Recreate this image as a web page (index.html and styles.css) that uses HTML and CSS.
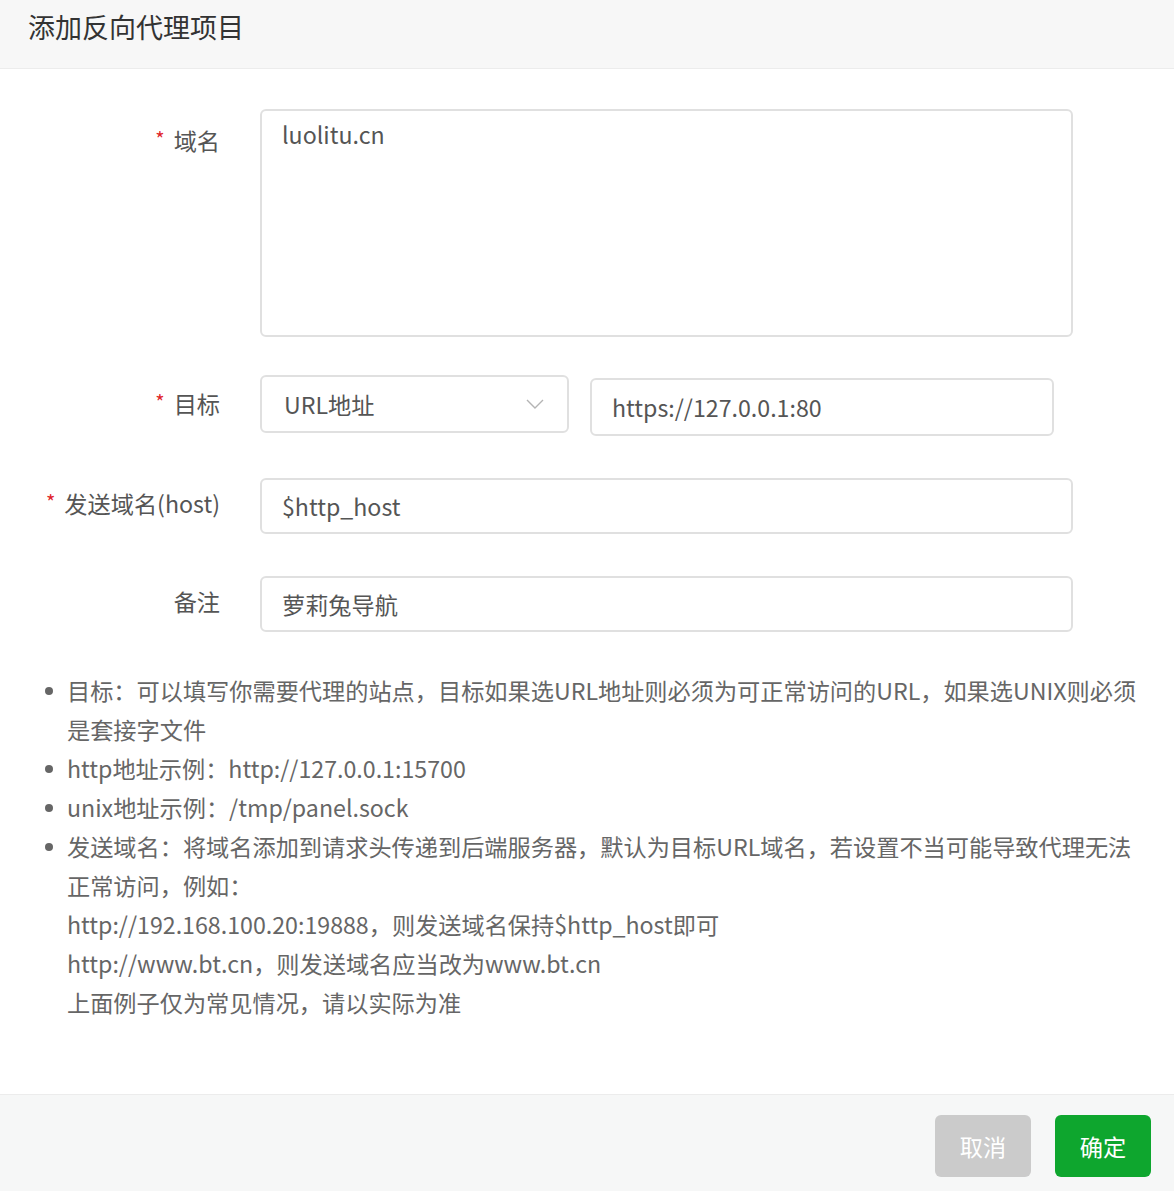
FILE: index.html
```html
<!DOCTYPE html>
<html lang="zh-CN">
<head>
<meta charset="utf-8">
<title>添加反向代理项目</title>
<link rel="stylesheet" href="styles.css">
</head>
<body>
<div class="modal">
  <div class="modal-header">添加反向代理项目</div>
  <div class="modal-body">
    <div class="form-row row-domain">
      <label class="form-label label-top"><span class="req">*</span>域名</label>
      <div class="form-field">
        <div class="textarea">luolitu.cn</div>
      </div>
    </div>
    <div class="form-row row-target">
      <label class="form-label"><span class="req">*</span>目标</label>
      <div class="form-field field-pair">
        <div class="select">
          <span>URL地址</span>
          <svg class="chevron" width="18" height="10" viewBox="0 0 18 10"><path d="M1 1 L9 9 L17 1" fill="none" stroke="#b4b4b4" stroke-width="1.4"/></svg>
        </div>
        <div class="input input-url">https://127.0.0.1:80</div>
      </div>
    </div>
    <div class="form-row row-host">
      <label class="form-label"><span class="req">*</span>发送域名(host)</label>
      <div class="form-field">
        <div class="input input-wide">$http_host</div>
      </div>
    </div>
    <div class="form-row row-note">
      <label class="form-label">备注</label>
      <div class="form-field">
        <div class="input input-wide">萝莉兔导航</div>
      </div>
    </div>
    <ul class="help">
      <li>目标：可以填写你需要代理的站点，目标如果选URL地址则必须为可正常访问的URL，如果选UNIX则必须是套接字文件</li>
      <li>http地址示例：http://127.0.0.1:15700</li>
      <li>unix地址示例：/tmp/panel.sock</li>
      <li>发送域名：将域名添加到请求头传递到后端服务器，默认为目标URL域名，若设置不当可能导致代理无法正常访问，例如：<br>http://192.168.100.20:19888，则发送域名保持$http_host即可<br>http://www.bt.cn，则发送域名应当改为www.bt.cn<br>上面例子仅为常见情况，请以实际为准</li>
    </ul>
  </div>
  <div class="modal-footer">
    <button class="btn btn-cancel">取消</button>
    <button class="btn btn-ok">确定</button>
  </div>
</div>
</body>
</html>
```
FILE: styles.css
```css
html, body {
  margin: 0;
  padding: 0;
  background: #ffffff;
}
body {
  font-family: "Noto Sans CJK SC", "Noto Sans", sans-serif;
  color: #555;
}
.modal {
  width: 1174px;
  height: 1191px;
  display: flex;
  flex-direction: column;
}
.modal-header {
  height: 69px;
  box-sizing: border-box;
  background: #f7f7f7;
  border-bottom: 1px solid #ececec;
  padding-left: 28px;
  font-size: 27px;
  line-height: 54px;
  color: #333;
}
.modal-body {
  flex: 1;
  padding-top: 40px;
}
.form-row {
  display: flex;
  align-items: center;
}
.form-label {
  width: 220px;
  flex: none;
  text-align: right;
  font-size: 23.2px;
  color: #555;
  margin-right: 40px;
  line-height: 30px;
  padding-bottom: 6px;
}
.label-top {
  align-self: flex-start;
  padding-top: 16px;
  padding-bottom: 0;
}
.req {
  color: #e0252b;
  font-size: 20px;
  line-height: 0;
  vertical-align: 3px;
  margin-right: 9px;
}
.form-field {
  display: flex;
  align-items: flex-start;
}
.row-domain { margin-bottom: 38px; }
.row-target { margin-bottom: 42px; }
.row-host { margin-bottom: 42px; }
.row-note { margin-bottom: 39px; }

.textarea {
  width: 813px;
  height: 228px;
  box-sizing: border-box;
  border: 2px solid #e0e0e0;
  border-radius: 6px;
  padding: 6px 20px;
  font-size: 23.2px;
  line-height: 34px;
  color: #555;
}
.field-pair {
  gap: 21px;
}
.select {
  width: 309px;
  height: 58px;
  box-sizing: border-box;
  border: 2px solid #e0e0e0;
  border-radius: 6px;
  padding: 0 23px 0 22px;
  display: flex;
  align-items: center;
  justify-content: space-between;
  font-size: 23.2px;
  color: #555;
}
.chevron {
  display: block;
}
.input {
  height: 56px;
  box-sizing: border-box;
  border: 2px solid #e0e0e0;
  border-radius: 6px;
  padding: 0 20px;
  display: flex;
  align-items: center;
  font-size: 23.2px;
  color: #555;
}
.input-url {
  width: 464px;
  height: 58px;
  margin-top: 3px;
}
.input-wide {
  width: 813px;
}
.help {
  list-style: none;
  margin: 0;
  padding: 0 28px 0 67px;
  font-size: 23.2px;
  line-height: 39px;
  color: #666;
}
.help li {
  position: relative;
}
.help li::before {
  content: "";
  position: absolute;
  left: -22px;
  top: 16px;
  width: 8px;
  height: 8px;
  border-radius: 50%;
  background: #666;
}
.modal-footer {
  height: 97px;
  box-sizing: border-box;
  background: #f6f7f7;
  border-top: 1px solid #ececec;
  display: flex;
  justify-content: flex-end;
  align-items: flex-start;
  gap: 24px;
  padding: 20px 23px 0 0;
}
.btn {
  width: 96px;
  height: 62px;
  border: none;
  border-radius: 6px;
  font-family: "Noto Sans CJK SC", "Noto Sans", sans-serif;
  font-size: 23.2px;
  color: #fff;
  padding: 0;
}
.btn-cancel {
  background: #cbcbcb;
}
.btn-ok {
  background: #0ea62e;
}
```
